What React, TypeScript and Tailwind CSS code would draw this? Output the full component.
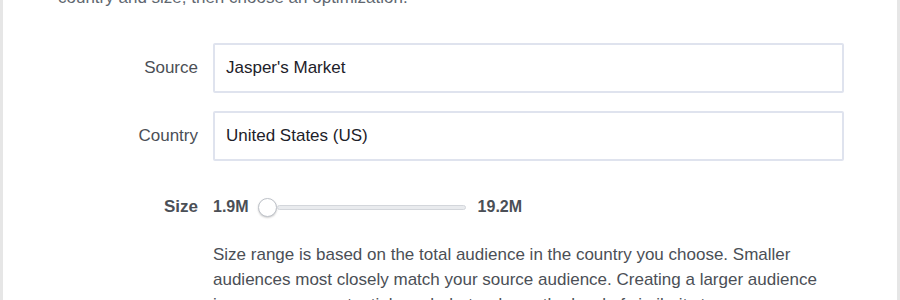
import React from 'react';

const Field = ({ label, value }: { label: string; value: string }) => (
  <>
    <div className="flex items-center justify-end text-[17px] text-[#4b4f56]">{label}</div>
    <div className="h-[50px] border-2 border-[#dfe3ee] rounded-[2px] flex items-center px-[11px] text-[17px] text-[#1d2129]">
      {value}
    </div>
  </>
);

const App = () => {
  return (
    <div className="h-[300px] w-[900px] overflow-hidden bg-white border-x-[3px] border-[#e6e6e6] font-['Liberation_Sans',Arial,sans-serif]">
      <p className="mt-[-13px] pl-[55px] text-[17px] leading-[22px] text-[#606770]">
        country and size, then choose an optimization.
      </p>

      <div className="mt-[34px] grid grid-cols-[195px_631px] gap-x-[15px] gap-y-[18px]">
        <Field label="Source" value="Jasper's Market" />
        <Field label="Country" value="United States (US)" />

        <div className="flex items-center justify-end h-[20px] mt-[18px] text-[17px] font-bold text-[#4b4f56]">Size</div>
        <div className="flex items-center h-[20px] mt-[18px] text-[16px] font-bold text-[#4b4f56]">
          <span>1.9M</span>
          <div className="flex items-center ml-[9px]">
            <div className="w-[19px] h-[19px] rounded-full border border-[#bec2c9] bg-white shadow-[0_1px_2px_rgba(0,0,0,0.2)]" />
            <div className="w-[189px] h-[5px] rounded-full bg-[#e9ebee] border border-[#d3d6db]" />
          </div>
          <span className="ml-[12px]">19.2M</span>
        </div>

        <div />
        <p className="mt-[7px] text-[17px] leading-[25px] text-[#4b4f56]">
          Size range is based on the total audience in the country you choose. Smaller audiences most closely match your source audience. Creating a larger audience increases your potential reach, but reduces the level of similarity to your source audience.
        </p>
      </div>
    </div>
  );
};

export default App;
